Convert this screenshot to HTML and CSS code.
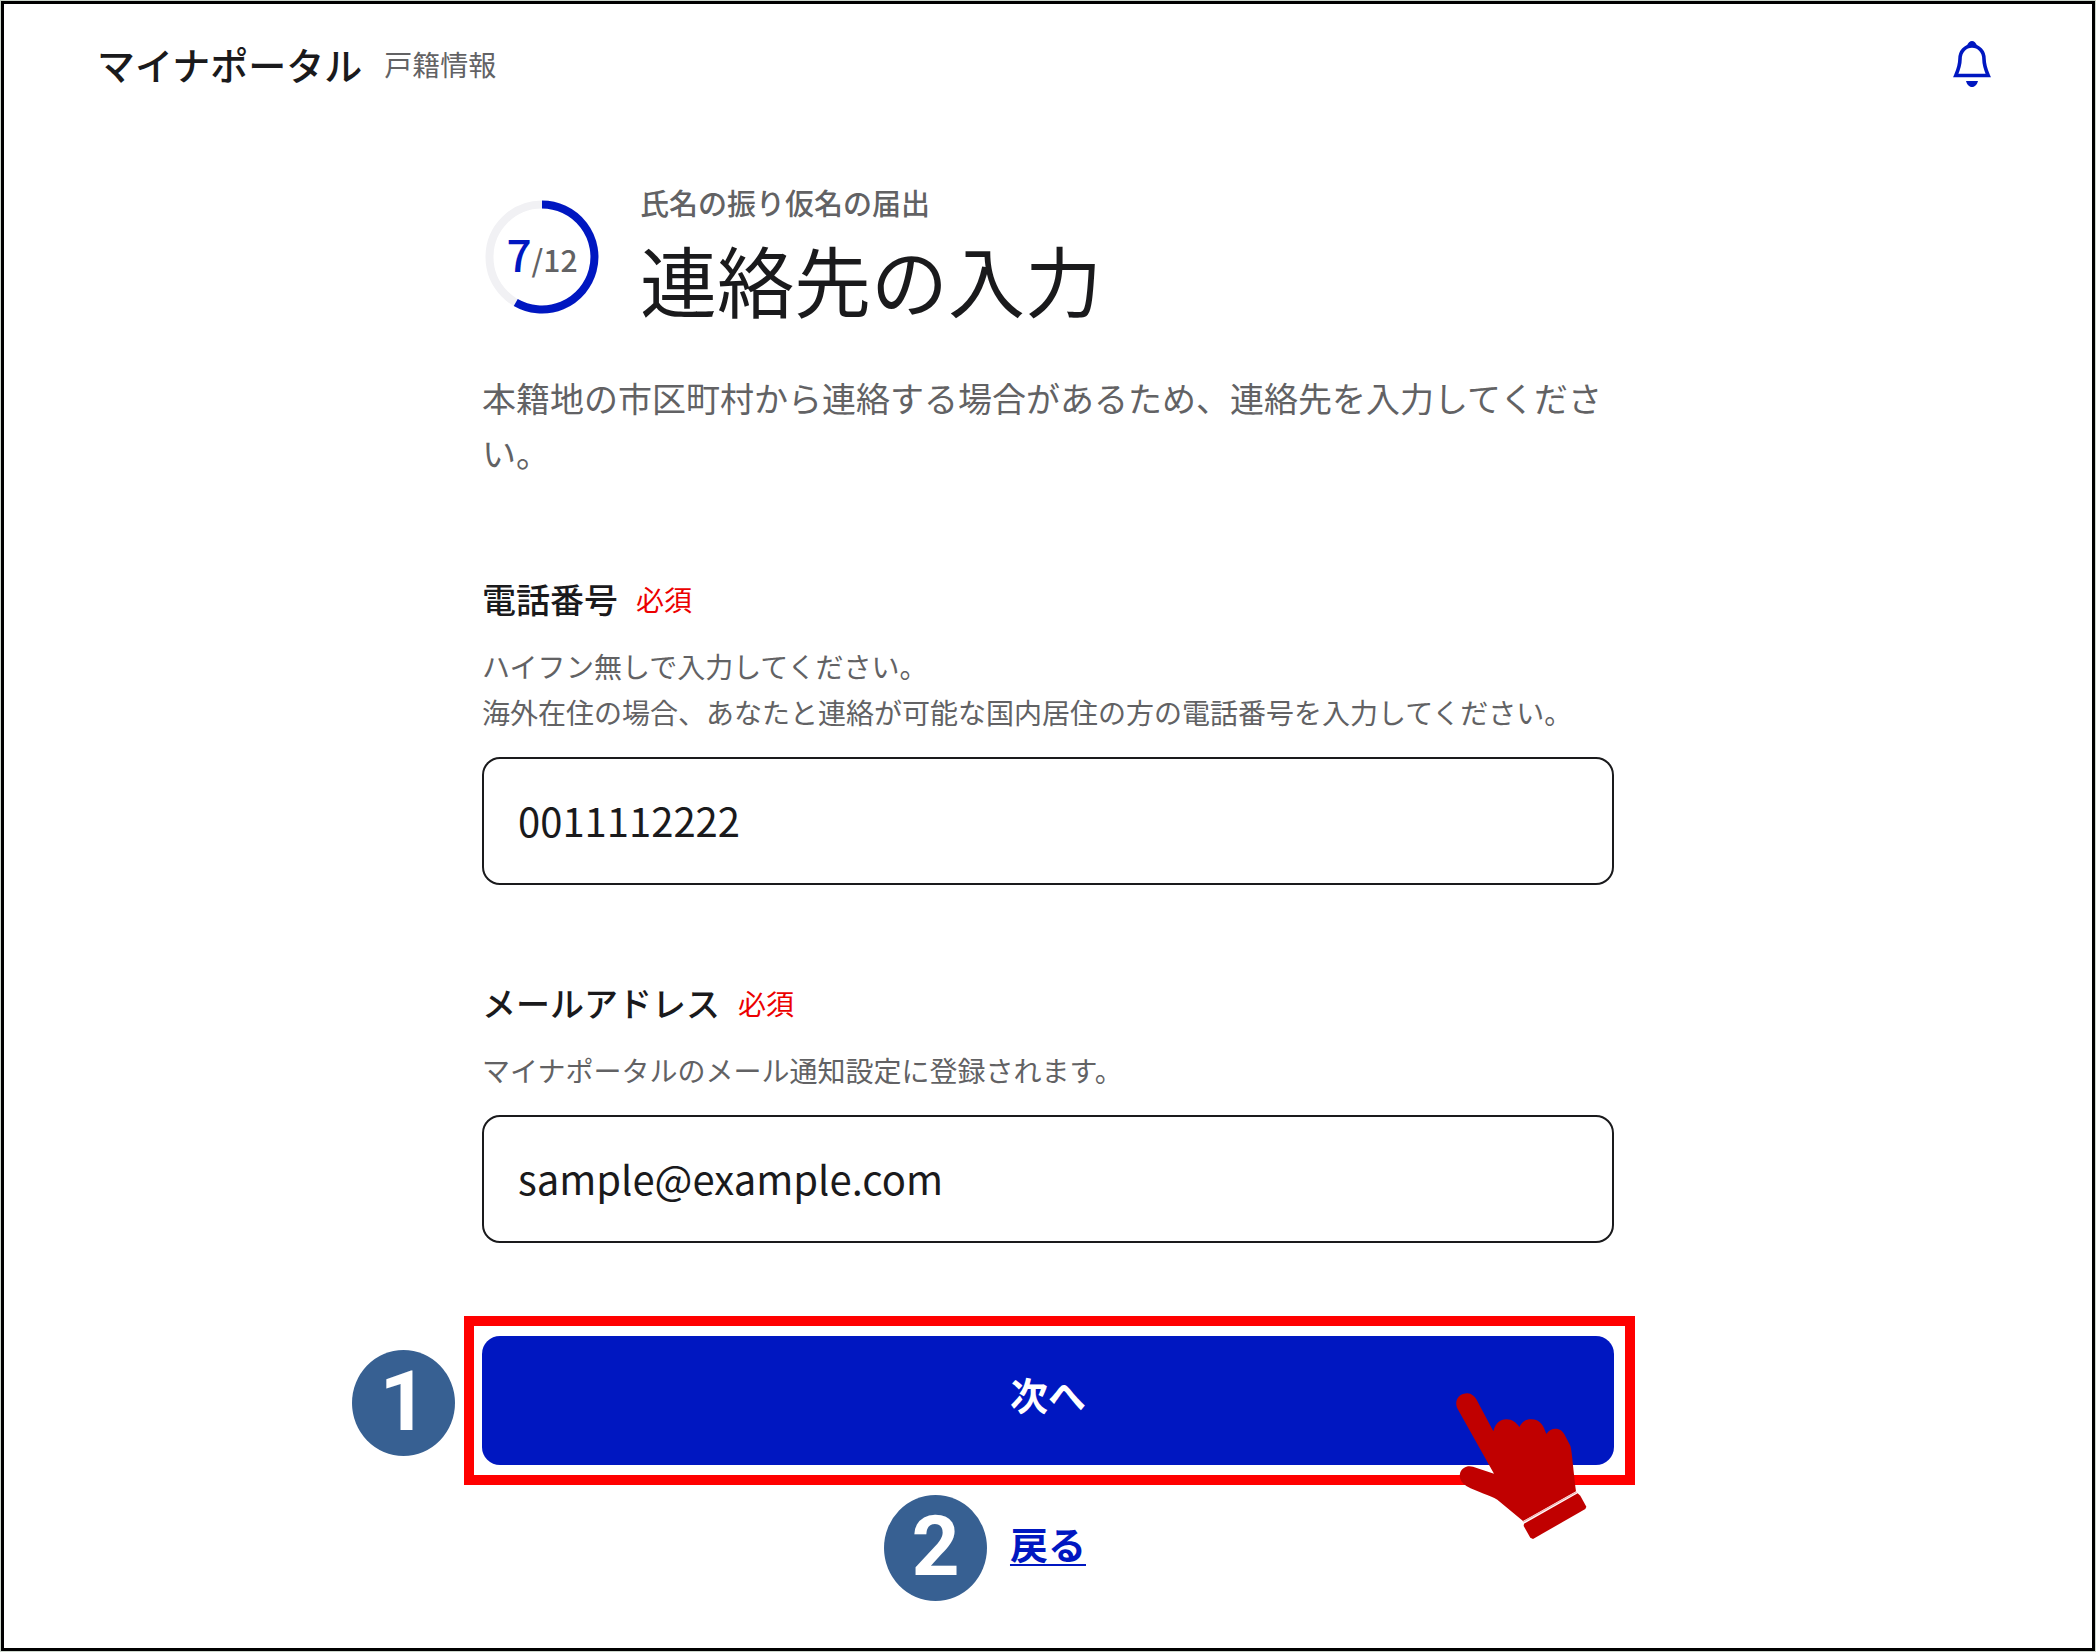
FILE: index.html
```
<!DOCTYPE html>
<html lang="ja">
<head>
    <meta charset="UTF-8">
    <meta name="viewport" content="width=device-width, initial-scale=1">
    <title>連絡先の入力</title>
    <link rel="stylesheet" href="styles.css">
</head>
<body>
    <div class="page">
        <header class="header">
            <div class="brand">
                <span class="brand-name">マイナポータル</span>
                <span class="brand-sub">戸籍情報</span>
            </div>
            <button type="button" class="bell">
                <svg viewBox="0 0 38 46" width="38" height="46">
                    <path d="M2.8 34.5C6 27 7 24 7 18C7 10.500 12 5 19 5S31 10.500 31 18C31 24 32 27 35.200 34.500Z" fill="none" stroke="#0017c1" stroke-width="3.6"/>
                    <path d="M13.500 5.500C15 1.500 17 0 19 0S23 1.500 24.500 5.500Z M13 40H25C24 43.500 22 46 19 46S14 43.500 13 40Z" fill="#0017c1"/>
                </svg>
            </button>
        </header>

        <main class="main">
            <div class="title">
                <div class="step">
                    <svg class="step-ring" viewBox="0 0 114 114">
                        <circle cx="57" cy="57" r="52.500" fill="none" stroke="#f1f1f4" stroke-width="8"/>
                        <path d="M57 4.500A52.500 52.500 0 1 1 30.750 102.500" fill="none" stroke="#0017c1" stroke-width="8"/>
                    </svg>
                    <p class="step-text"><span class="step-now">7</span>/12</p>
                </div>
                <div>
                    <p class="kicker">氏名の振り仮名の届出</p>
                    <h1>連絡先の入力</h1>
                </div>
            </div>
            <p class="lead">本籍地の市区町村から連絡する場合があるため、連絡先を入力してください。</p>

            <form>
                <div class="field">
                    <div class="field-head">
                        <label for="tel">電話番号</label>
                        <span class="required">必須</span>
                    </div>
                    <p class="hint">ハイフン無しで入力してください。<br>海外在住の場合、あなたと連絡が可能な国内居住の方の電話番号を入力してください。</p>
                    <input type="tel" id="tel" value="0011112222">
                </div>
                <div class="field">
                    <div class="field-head">
                        <label for="mail">メールアドレス</label>
                        <span class="required">必須</span>
                    </div>
                    <p class="hint">マイナポータルのメール通知設定に登録されます。</p>
                    <input type="email" id="mail" value="sample@example.com">
                </div>

                <div class="submit">
                    <button type="button" class="next">次へ</button>
                    <div class="frame"></div>
                    <span class="badge badge-next">1</span>
                    <svg class="hand" viewBox="165 306 402 444">
                        <g fill="#c00000">
                            <path d="M173 357C160 331 178 310 202 310C215 311 223 318 229 328L280 424C286 400 300 388 319 388C337 388 349 398 358 411C366 395 377 388 393 388C421 388 430 407 439 432C447 420 456 416 466 416C480 416 488 423 493 433L511 467C516 485 518 520 528 604L369 693L292 629C270 616 232 606 199 588C182 577 176 563 181 547C187 532 202 525 219 530L282 551Z"/>
                            <path d="M372 701L533 610L541 617L559 650L556 657L399 747L391 743L371 708Z"/>
                        </g>
                        <path d="M369 696L530 606" stroke="#f0b4b4" stroke-width="4"/>
                    </svg>
                </div>
            </form>

            <div class="back">
                <a href="#">戻る</a>
                <span class="badge badge-back">2</span>
            </div>
        </main>
    </div>
</body>
</html>
```
FILE: styles.css
```
* {
    box-sizing: border-box;
}
body {
    margin: 0;
    padding: 1px;
    background: #ccd6cc;
    color: #1a1a1c;
    font-family: "Noto Sans CJK JP", sans-serif;
}
p, h1 {
    margin: 0;
}
.page {
    min-height: calc(100vh - 2px);
    border: 3px solid #000;
    background: #fff;
}

/* header */
.header {
    display: flex;
    justify-content: space-between;
    align-items: center;
    padding: 32px 101px 0 93px;
}
.brand {
    display: flex;
    align-items: center;
    gap: 22px;
}
.brand-name {
    font-size: 38px;
    font-weight: 500;
    line-height: 56px;
}
.brand-sub {
    color: #626264;
    font-size: 28px;
}
.bell {
    display: flex;
    padding: 0;
    border: 0;
    background: none;
    cursor: pointer;
}

.main {
    max-width: 1132px;
    margin: 88px auto 0;
}
.title {
    display: flex;
    align-items: center;
    gap: 41px;
    margin-left: 3px;
}
.step {
    position: relative;
    width: 114px;
    height: 114px;
}
.step-ring {
    display: block;
}
.step-text {
    position: absolute;
    inset: 0;
    color: #626264;
    font-size: 30px;
    font-weight: 500;
    line-height: 106px;
    text-align: center;
}
.step-now {
    color: #0017c1;
    font-size: 44px;
}
.kicker {
    color: #626264;
    font-size: 29px;
    font-weight: 500;
    line-height: 44px;
}
h1 {
    font-size: 77px;
    font-weight: 400;
    line-height: 110px;
}
.lead {
    margin-top: 36px;
    color: #626264;
    font-size: 34px;
    line-height: 55px;
}

/* form */
.field {
    margin-top: 92px;
}
.lead + form {
    padding-top: 1px;
}
.field-head {
    display: flex;
    align-items: center;
    gap: 18px;
}
.field-head label {
    font-size: 34px;
    font-weight: 500;
    line-height: 52px;
}
.required {
    color: #ec0000;
    font-size: 28px;
}
.hint {
    margin: 18px 0 22px;
    color: #626264;
    font-size: 28px;
    line-height: 46px;
}
input {
    display: block;
    width: 100%;
    height: 128px;
    padding: 0 34px 2px;
    border: 2px solid #1a1a1c;
    border-radius: 18px;
    color: #1a1a1c;
    font-family: inherit;
    font-size: 40px;
}
.submit {
    position: relative;
    margin-top: 93px;
}
.next {
    display: block;
    width: 100%;
    height: 129px;
    padding: 0 0 14px;
    border: 0;
    border-radius: 18px;
    background: #0017c1;
    color: #fff;
    font-family: inherit;
    font-size: 38px;
    font-weight: 700;
    cursor: pointer;
}
.back {
    position: relative;
    width: max-content;
    margin: 48px auto 0;
}
.back a {
    display: block;
    color: #0017c1;
    font-size: 38px;
    font-weight: 700;
    line-height: 60px;
    text-underline-offset: 5px;
    text-decoration-thickness: 2px;
}

/* guide marks */
.frame {
    position: absolute;
    inset: -20px -21px -20px -18px;
    border: 10px solid #f00;
    pointer-events: none;
}
.badge {
    position: absolute;
    width: 103px;
    height: 106px;
    border-radius: 50%;
    background: #376092;
    color: #fff;
    font-family: Roboto, "Liberation Sans", sans-serif;
    font-size: 84px;
    font-weight: 700;
    line-height: 104px;
    text-align: center;
}
.badge-next {
    top: 14px;
    left: -130px;
}
.badge-back {
    top: -18px;
    left: -126px;
}
.hand {
    position: absolute;
    top: 56px;
    right: 25px;
    width: 134px;
    height: 148px;
    pointer-events: none;
}
```
